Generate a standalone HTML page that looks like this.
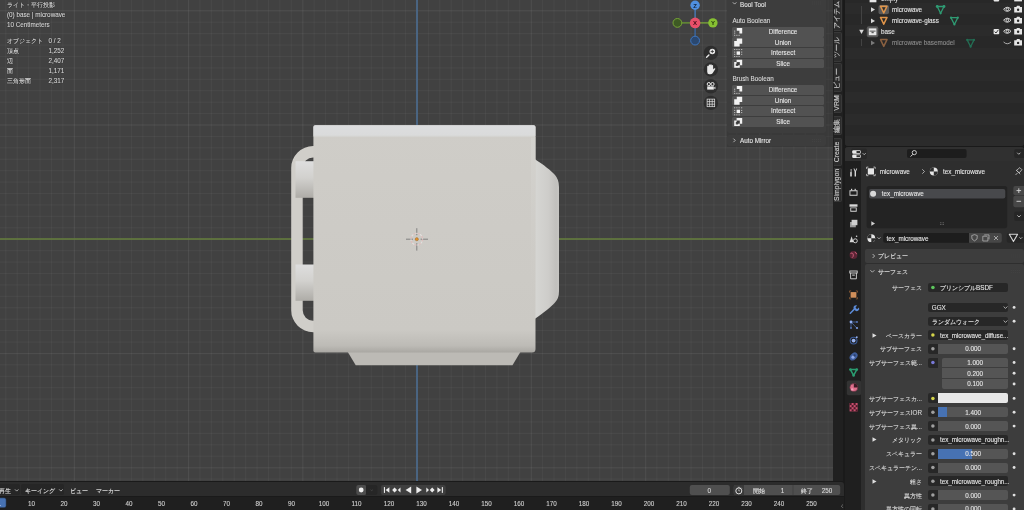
<!DOCTYPE html>
<html><head><meta charset="utf-8">
<style>
*{margin:0;padding:0;box-sizing:border-box}
html,body{width:1024px;height:510px;overflow:hidden;-webkit-font-smoothing:antialiased;background:#1a1a1a;font-family:"Liberation Sans",sans-serif;color:#e0e0e0}
.a{position:absolute}
.t{position:absolute;white-space:nowrap;font-size:6.3px;line-height:8px;-webkit-text-stroke-width:0.1px}
#vp{position:absolute;left:0;top:0;width:833px;height:481px;background-color:#414141;overflow:hidden;
background-image:
linear-gradient(to right, rgba(255,255,255,0.035) 1.4px, transparent 1.4px),
linear-gradient(to bottom, rgba(255,255,255,0.035) 1.4px, transparent 1.4px),
linear-gradient(to right, rgba(255,255,255,0.036) 1.4px, transparent 1.4px),
linear-gradient(to bottom, rgba(255,255,255,0.04) 1.4px, transparent 1.4px);
background-size:114.3px 114.3px,114.3px 114.3px,11.43px 11.43px,11.43px 11.43px;background-position:73.9px 0,0 10.3px,5.3px 0,0 10.3px}
.ov{color:#dcdcdc;text-shadow:0 0 1px #000}
.btn{position:absolute;left:732.2px;width:91.8px;height:10px;background:#525252;border-radius:1.5px}
.btn span{position:absolute;left:0;right:0;top:1.4px;-webkit-text-stroke-width:0.1px;text-align:center;font-size:6.3px;line-height:8px;color:#e6e6e6}
.tab{position:absolute;left:833px;width:9px;background:#2b2b2b;border-radius:0 2px 2px 0}
</style></head><body><div id="root" style="position:absolute;left:0;top:0;width:1024px;height:510px;will-change:transform;overflow:hidden">
<div id="vp">
  <!-- axes -->
  <div class="a" style="left:0;top:238.2px;width:833px;height:1.8px;background:linear-gradient(to bottom, rgba(93,117,61,0.4), #62793c 35%, #62793c 65%, rgba(93,117,61,0.4))"></div>
  <div class="a" style="left:415.6px;top:0;width:2.6px;height:481px;background:linear-gradient(to right, rgba(74,102,134,0.45), #4a6787 30%, #4a6787 70%, rgba(74,102,134,0.45))"></div>

  <!-- model -->
  <svg class="a" style="left:0;top:0" width="833" height="481" viewBox="0 0 833 481">
    <defs>
      <linearGradient id="prot" x1="0" x2="1" y1="0" y2="0">
        <stop offset="0" stop-color="#d6d6d3"/><stop offset="0.55" stop-color="#cecdca"/><stop offset="0.88" stop-color="#c1c0bd"/><stop offset="1" stop-color="#c6c5c2"/>
      </linearGradient>
      <linearGradient id="cyl" x1="0" x2="0" y1="0" y2="1">
        <stop offset="0" stop-color="#dedede"/><stop offset="0.45" stop-color="#d2d1ce"/><stop offset="1" stop-color="#aeaca7"/>
      </linearGradient>
      <linearGradient id="bodyb" x1="0" x2="0" y1="0" y2="1">
        <stop offset="0" stop-color="#cfcdc8"/><stop offset="0.9" stop-color="#cbc9c4"/><stop offset="0.97" stop-color="#bdbbb6"/><stop offset="1" stop-color="#a9a7a2"/>
      </linearGradient>
    <linearGradient id="rstrip" x1="0" x2="0" y1="0" y2="1"><stop offset="0" stop-color="#d4d3cf" stop-opacity="0.9"/><stop offset="1" stop-color="#cfcdc8" stop-opacity="0"/></linearGradient>
    <linearGradient id="topband" x1="0" x2="0" y1="0" y2="1"><stop offset="0" stop-color="#dcdddf"/><stop offset="0.8" stop-color="#dadbdb"/><stop offset="1" stop-color="#cfcdc8"/></linearGradient>
    </defs>
    <!-- right protrusion -->
    <path d="M535 159.2 C544 165 551 170.5 555 175 Q559 179.5 559 187 L559 291 Q559 298.5 555 302.5 C551 307 544 312.5 535 318.8 Z" fill="url(#prot)"/>
    <!-- base -->
    <path d="M347.8 352 L520.4 352 L512.5 365.3 L355.7 365.3 Z" fill="#bcbab5"/>
    <!-- handle -->
    <path fill-rule="evenodd" d="M314 146 L313.2 146 A22 22 0 0 0 291.2 168 L291.2 310.2 A22 22 0 0 0 313.2 332.2 L314 332.2 Z M314 157.5 L313.2 157.5 A10.5 10.5 0 0 0 302.7 168 L302.7 310.3 A10.5 10.5 0 0 0 313.2 320.8 L314 320.8 Z" fill="#d0cec9"/>
    <!-- cylinders -->
    <rect x="295.5" y="161.2" width="19" height="36.6" fill="url(#cyl)"/>
    <rect x="295.5" y="264.5" width="19" height="36.3" fill="url(#cyl)"/>
    <!-- body -->
    <path d="M313.4 127 Q313.4 125.2 315.4 125.2 L533.5 125.2 Q535.5 125.2 535.5 127 L535.5 349 Q535.5 352.5 532 352.5 L315.4 352.5 Q313.4 352.5 313.4 350.5 Z" fill="url(#bodyb)"/>
    <path d="M531 137 L535.5 137 L535.5 300 L531 300 Z" fill="url(#rstrip)"/>
    <rect x="313.4" y="125.2" width="222.1" height="12.4" rx="1.8" fill="url(#topband)"/>
    
  </svg>

  <!-- overlay text -->
  <div class="t ov" style="left:7px;top:1px">ライト・平行投影</div>
  <div class="t ov" style="left:7px;top:11px">(0) base | microwave</div>
  <div class="t ov" style="left:7px;top:21px">10 Centimeters</div>
  <div class="t ov" style="left:7px;top:37px">オブジェクト</div>
  <div class="t ov" style="left:48.5px;top:37px">0 / 2</div>
  <div class="t ov" style="left:7px;top:47px">頂点</div>
  <div class="t ov" style="left:48.5px;top:47px">1,252</div>
  <div class="t ov" style="left:7px;top:57px">辺</div>
  <div class="t ov" style="left:48.5px;top:57px">2,407</div>
  <div class="t ov" style="left:7px;top:67px">面</div>
  <div class="t ov" style="left:48.5px;top:67px">1,171</div>
  <div class="t ov" style="left:7px;top:77px">三角形面</div>
  <div class="t ov" style="left:48.5px;top:77px">2,317</div>

  <!-- 3d cursor -->
  <svg class="a" style="left:400px;top:223px" width="34" height="34" viewBox="400 223 34 34">
    <path d="M406 239.2 L413 239.2 M420.6 239.2 L428 239.2 M416.8 228.2 L416.8 235.2 M416.8 243.2 L416.8 250.6" stroke="#6e6e6e" stroke-width="0.8"/>
    <circle cx="416.8" cy="239.2" r="5.8" fill="none" stroke="#e8b8b8" stroke-width="1.1" stroke-dasharray="2.3 2.3" opacity="0.75"/>
    <circle cx="416.8" cy="239.2" r="5.8" fill="none" stroke="#f4eeee" stroke-width="1.1" stroke-dasharray="2.3 2.3" stroke-dashoffset="2.3" opacity="0.6"/>
    <circle cx="416.8" cy="239.2" r="1.6" fill="#e0902a" stroke="#8a5a2a" stroke-width="0.4"/>
  </svg>
  <!-- gizmo -->
  <svg class="a" style="left:660px;top:0" width="70" height="120" viewBox="660 0 70 120">
    <path d="M695.1 22.9 L695.1 5.3" stroke="#4a7fc0" stroke-width="1.3"/>
    <path d="M695.1 22.9 L695.1 40.6" stroke="#3a6aa8" stroke-width="1.3"/>
    <path d="M695.1 22.9 L712.9 22.9" stroke="#7aa838" stroke-width="1.3"/>
    <path d="M695.1 22.9 L677.4 22.9" stroke="#6a9a30" stroke-width="1.3"/>
    <circle cx="677.4" cy="22.9" r="4.4" fill="#3e5a24" stroke="#76a436" stroke-width="1"/>
    <circle cx="695.1" cy="40.6" r="4.4" fill="#2a4870" stroke="#3d76c0" stroke-width="1"/>
    <circle cx="695.1" cy="5.3" r="4.7" fill="#4f8fe0"/>
    <circle cx="712.9" cy="22.9" r="4.7" fill="#86c032"/>
    <circle cx="695.1" cy="22.9" r="5.3" fill="#e8506a"/>
    <text x="695.1" y="7.6" font-size="6" font-family="Liberation Sans" font-weight="bold" text-anchor="middle" fill="#10233d">Z</text>
    <text x="712.9" y="25.2" font-size="6" font-family="Liberation Sans" font-weight="bold" text-anchor="middle" fill="#20330a">Y</text>
    <text x="695.1" y="25.2" font-size="6" font-family="Liberation Sans" font-weight="bold" text-anchor="middle" fill="#3d0a14">X</text>
    <!-- nav buttons -->
    <g fill="rgba(30,30,30,0.55)">
      <circle cx="710.9" cy="52.9" r="7.2"/><circle cx="710.9" cy="69.5" r="7.2"/><circle cx="710.9" cy="86.3" r="7.2"/><circle cx="710.9" cy="102.9" r="7.2"/>
    </g>
    <!-- zoom -->
    <circle cx="712.3" cy="51.5" r="2.8" fill="#e8e8e8"/>
    <path d="M708.9 55 L706.6 57.3" stroke="#e8e8e8" stroke-width="1.4" stroke-linecap="round"/>
    <path d="M712.3 49.9 L712.3 53.1 M710.7 51.5 L713.9 51.5" stroke="#303030" stroke-width="0.8"/>
    <!-- hand -->
    <path d="M707.2 70 L707.2 66.6 Q707.2 65.8 708 65.8 Q708.7 65.8 708.7 66.6 L708.7 69 L708.7 65.3 Q708.7 64.5 709.5 64.5 Q710.2 64.5 710.2 65.3 L710.2 68.8 L710.2 65 Q710.2 64.2 711 64.2 Q711.7 64.2 711.7 65 L711.7 68.8 L711.7 65.6 Q711.7 64.9 712.4 64.9 Q713.1 64.9 713.1 65.6 L713.1 69.6 L713.9 68.6 Q714.6 67.9 715.2 68.4 Q715.6 68.9 715 69.6 L712.6 73.3 Q711.8 74.3 710.3 74.3 L709.3 74.3 Q707.2 74.3 707.2 71.8 Z" fill="#e8e8e8"/>
    <!-- camera -->
    <circle cx="708.8" cy="84.1" r="1.6" fill="none" stroke="#e8e8e8" stroke-width="1"/>
    <circle cx="712.5" cy="84.1" r="1.6" fill="none" stroke="#e8e8e8" stroke-width="1"/>
    <rect x="707.2" y="86.4" width="6.6" height="3.2" fill="#e8e8e8"/>
    <path d="M713.8 87.9 L715.4 86.6 L715.4 89.3 Z" fill="#e8e8e8"/>
    <!-- grid -->
    <g fill="none" stroke="#e8e8e8" stroke-width="0.7">
      <rect x="707.1" y="99.1" width="7.6" height="7.6"/>
      <path d="M709.6 99.1 L709.6 106.7 M712.2 99.1 L712.2 106.7 M707.1 101.6 L714.7 101.6 M707.1 104.2 L714.7 104.2"/>
    </g>
  </svg>

  <!-- N panel region -->
  <div class="a" style="left:727px;top:0;width:106px;height:147px;background:rgba(44,44,44,0.35)"></div>
  <div class="a" style="left:727px;top:-2px;width:99px;height:134.8px;background:#3d3d3d;border-radius:2px"></div>
  <div class="a" style="left:727px;top:134.6px;width:99px;height:11.9px;background:#3d3d3d;border-radius:2px"></div>
  <div class="t" style="left:740px;top:0.6px;color:#e6e6e6">Bool Tool</div>
  <div class="t" style="left:732.4px;top:17.2px;color:#d8d8d8">Auto Boolean</div>
  <div class="t" style="left:732.4px;top:74.8px;color:#d8d8d8">Brush Boolean</div>
  <div class="btn" style="top:26.8px;height:9.8px"><span style="left:10px">Difference</span></div>
  <div class="btn" style="top:37.2px;height:9.8px"><span style="left:10px">Union</span></div>
  <div class="btn" style="top:47.8px;height:9.8px"><span style="left:10px">Intersect</span></div>
  <div class="btn" style="top:58.5px;height:9.8px"><span style="left:10px">Slice</span></div>
  <div class="btn" style="top:84.9px;height:9.8px"><span style="left:10px">Difference</span></div>
  <div class="btn" style="top:95.5px;height:9.8px"><span style="left:10px">Union</span></div>
  <div class="btn" style="top:106.1px;height:9.8px"><span style="left:10px">Intersect</span></div>
  <div class="btn" style="top:116.9px;height:9.8px"><span style="left:10px">Slice</span></div>
  <svg class="a" style="left:727px;top:0" width="100" height="150" viewBox="727 0 100 150">
<path d="M732.8 2.3 L734.6 4.1 L736.4 2.3" fill="none" stroke="#d0d0d0" stroke-width="0.8"/>
<path d="M733.4 138.6 L735.2 140.4 L733.4 142.2" fill="none" stroke="#d0d0d0" stroke-width="0.8"/>
<g stroke="#484848" stroke-width="0.5" stroke-dasharray="1 1"><path d="M812 2 L822 2 M812 4 L822 4 M812 139.5 L822 139.5 M812 141.5 L822 141.5"/></g>
<path d="M736.8000000000001 28.0 L742.2 28.0 L742.2 33.4 L739.4000000000001 33.4 L739.4000000000001 30.8 L736.8000000000001 30.8 Z" fill="#f2f2f2"/><g fill="#cfcfcf"><rect x="734.2" y="30.6" width="1" height="1"/><rect x="734.2" y="32.6" width="1" height="1"/><rect x="734.2" y="34.8" width="1" height="1"/><rect x="736.4000000000001" y="34.8" width="1" height="1"/><rect x="738.6" y="34.8" width="1" height="1"/></g>
<path d="M736.8000000000001 38.400000000000006 L742.2 38.400000000000006 L742.2 43.800000000000004 L739.6 43.800000000000004 L739.6 46.400000000000006 L734.2 46.400000000000006 L734.2 41.00000000000001 L736.8000000000001 41.00000000000001 Z" fill="#f2f2f2"/>
<rect x="736.6" y="51.4" width="3.4" height="3.4" fill="#f2f2f2"/><g fill="#cfcfcf"><rect x="734.2" y="49.0" width="1" height="1"/><rect x="736.4000000000001" y="49.0" width="1" height="1"/><rect x="738.6" y="49.0" width="1" height="1"/><rect x="741.2" y="49.0" width="1" height="1"/><rect x="734.2" y="51.6" width="1" height="1"/><rect x="734.2" y="53.8" width="1" height="1"/><rect x="741.2" y="51.6" width="1" height="1"/><rect x="741.2" y="53.8" width="1" height="1"/><rect x="734.2" y="56.0" width="1" height="1"/><rect x="736.4000000000001" y="56.0" width="1" height="1"/><rect x="738.6" y="56.0" width="1" height="1"/></g>
<path fill-rule="evenodd" d="M736.6 59.7 L742.2 59.7 L742.2 65.3 L739.8000000000001 65.3 L739.8000000000001 67.7 L734.2 67.7 L734.2 62.1 L736.6 62.1 Z M735.8000000000001 63.7 L735.8000000000001 66.10000000000001 L738.2 66.10000000000001 L738.2 63.7 Z" fill="#f2f2f2"/><rect x="736.6" y="62.1" width="3.2" height="3.2" fill="#3a3a3a"/>
<path d="M736.8000000000001 86.10000000000001 L742.2 86.10000000000001 L742.2 91.50000000000001 L739.4000000000001 91.50000000000001 L739.4000000000001 88.9 L736.8000000000001 88.9 Z" fill="#f2f2f2"/><g fill="#cfcfcf"><rect x="734.2" y="88.7" width="1" height="1"/><rect x="734.2" y="90.7" width="1" height="1"/><rect x="734.2" y="92.9" width="1" height="1"/><rect x="736.4000000000001" y="92.9" width="1" height="1"/><rect x="738.6" y="92.9" width="1" height="1"/></g>
<path d="M736.8000000000001 96.7 L742.2 96.7 L742.2 102.10000000000001 L739.6 102.10000000000001 L739.6 104.7 L734.2 104.7 L734.2 99.3 L736.8000000000001 99.3 Z" fill="#f2f2f2"/>
<rect x="736.6" y="109.7" width="3.4" height="3.4" fill="#f2f2f2"/><g fill="#cfcfcf"><rect x="734.2" y="107.3" width="1" height="1"/><rect x="736.4000000000001" y="107.3" width="1" height="1"/><rect x="738.6" y="107.3" width="1" height="1"/><rect x="741.2" y="107.3" width="1" height="1"/><rect x="734.2" y="109.89999999999999" width="1" height="1"/><rect x="734.2" y="112.1" width="1" height="1"/><rect x="741.2" y="109.89999999999999" width="1" height="1"/><rect x="741.2" y="112.1" width="1" height="1"/><rect x="734.2" y="114.3" width="1" height="1"/><rect x="736.4000000000001" y="114.3" width="1" height="1"/><rect x="738.6" y="114.3" width="1" height="1"/></g>
<path fill-rule="evenodd" d="M736.6 118.10000000000001 L742.2 118.10000000000001 L742.2 123.7 L739.8000000000001 123.7 L739.8000000000001 126.10000000000001 L734.2 126.10000000000001 L734.2 120.50000000000001 L736.6 120.50000000000001 Z M735.8000000000001 122.10000000000001 L735.8000000000001 124.50000000000001 L738.2 124.50000000000001 L738.2 122.10000000000001 Z" fill="#f2f2f2"/><rect x="736.6" y="120.50000000000001" width="3.2" height="3.2" fill="#3a3a3a"/>
</svg>
  <div class="t" style="left:740px;top:137.1px;color:#e6e6e6">Auto Mirror</div>

</div>
  <!-- tab strip -->
  <div class="a" style="left:833px;top:0;width:10px;height:481px;background:#202020"></div>
  <div class="a" style="left:833.5px;top:-2px;width:8.4px;height:33.4px;background:#2c2c2c;border:0.6px solid #383838;border-left:none;border-radius:0 2px 2px 0"></div>
  <div class="t" style="left:797.1px;top:10.50px;width:80px;text-align:center;transform:rotate(-90deg);color:#cfcfcf;font-size:6.9px">アイテム</div>
  <div class="a" style="left:833.5px;top:32.4px;width:8.4px;height:29.4px;background:#2c2c2c;border:0.6px solid #383838;border-left:none;border-radius:0 2px 2px 0"></div>
  <div class="t" style="left:797.1px;top:42.90px;width:80px;text-align:center;transform:rotate(-90deg);color:#cfcfcf;font-size:6.9px">ツール</div>
  <div class="a" style="left:833.5px;top:63.4px;width:8.4px;height:29.0px;background:#2c2c2c;border:0.6px solid #383838;border-left:none;border-radius:0 2px 2px 0"></div>
  <div class="t" style="left:797.1px;top:73.70px;width:80px;text-align:center;transform:rotate(-90deg);color:#cfcfcf;font-size:6.9px">ビュー</div>
  <div class="a" style="left:833.5px;top:93.8px;width:8.4px;height:19.7px;background:#2c2c2c;border:0.6px solid #383838;border-left:none;border-radius:0 2px 2px 0"></div>
  <div class="t" style="left:797.1px;top:99.45px;width:80px;text-align:center;transform:rotate(-90deg);color:#cfcfcf;font-size:6.9px">VRM</div>
  <div class="a" style="left:833.5px;top:116px;width:8.4px;height:19.4px;background:#2c2c2c;border:0.6px solid #383838;border-left:none;border-radius:0 2px 2px 0"></div>
  <div class="t" style="left:797.1px;top:121.50px;width:80px;text-align:center;transform:rotate(-90deg);color:#cfcfcf;font-size:6.9px">編集</div>
  <div class="a" style="left:833.5px;top:137.9px;width:8.4px;height:28.0px;background:#2c2c2c;border:0.6px solid #383838;border-left:none;border-radius:0 2px 2px 0"></div>
  <div class="t" style="left:797.1px;top:147.70px;width:80px;text-align:center;transform:rotate(-90deg);color:#cfcfcf;font-size:6.9px">Create</div>
  <div class="a" style="left:833.5px;top:168.3px;width:8.4px;height:34.1px;background:#2c2c2c;border:0.6px solid #383838;border-left:none;border-radius:0 2px 2px 0"></div>
  <div class="t" style="left:797.1px;top:181.15px;width:80px;text-align:center;transform:rotate(-90deg);color:#cfcfcf;font-size:6.9px">Simplygon</div>

<!-- outliner -->
<div class="a" style="left:845px;top:0;width:179px;height:146px;background:#282828;border-radius:0 0 3px 3px;overflow:hidden">
  <div class="a" style="left:0;top:3.2px;width:179px;height:11.1px;background:#2b2b2b"></div>
  <div class="a" style="left:0;top:25.4px;width:179px;height:11.1px;background:#2b2b2b"></div>
  <div class="a" style="left:0;top:47.6px;width:179px;height:11.1px;background:#2b2b2b"></div>
  <div class="a" style="left:0;top:69.8px;width:179px;height:11.1px;background:#2b2b2b"></div>
  <div class="a" style="left:0;top:92px;width:179px;height:11.1px;background:#2b2b2b"></div>
  <div class="a" style="left:0;top:114.2px;width:179px;height:11.1px;background:#2b2b2b"></div>
  <div class="a" style="left:0;top:136.4px;width:179px;height:11.1px;background:#2b2b2b"></div>
</div>
<svg class="a" style="left:845px;top:0" width="179" height="146" viewBox="845 0 179 146">
  <!-- tree lines -->
  <line x1="861.5" y1="6" x2="861.5" y2="24" stroke="#4a4a4a" stroke-width="0.8"/>
  <line x1="861.5" y1="39" x2="861.5" y2="46" stroke="#4a4a4a" stroke-width="0.8"/>
  <!-- top row collection icon -->
  <rect x="869.6" y="-4" width="6.8" height="6.3" fill="#e6e6e6"/>
  <!-- microwave row -->
  <path d="M871 7.3 L875 9.6 L871 11.9 Z" fill="#d8d8d8"/>
  <rect x="878.5" y="5" width="10.5" height="9.3" rx="2" fill="#5a5a5a"/>
  <path d="M880.5 6.2 L887 6.2 L883.75 13 Z" fill="none" stroke="#e0954a" stroke-width="1.5" stroke-linejoin="round"/>
  <path d="M882.3 7.6 L885.2 7.6 L883.75 10.5 Z" fill="#3a2a1a"/>
  <!-- glass row -->
  <path d="M871 18.6 L875 20.9 L871 23.2 Z" fill="#d8d8d8"/>
  <path d="M880.5 17.4 L887 17.4 L883.75 24.2 Z" fill="none" stroke="#e0954a" stroke-width="1.5" stroke-linejoin="round"/>
  <!-- base row -->
  <path d="M859.2 29.7 L863.8 29.7 L861.5 34 Z" fill="#d8d8d8"/>
  <rect x="866.8" y="26.3" width="11.5" height="11" rx="2" fill="#5a5a5a"/>
  <rect x="868.8" y="28.4" width="7.6" height="6.8" fill="#e8e8e8"/>
  <rect x="869.6" y="30.6" width="6" height="1" fill="#5a5a5a"/>
  <rect x="871.5" y="31.6" width="2.2" height="1.6" fill="#5a5a5a"/>
  <!-- basemodel row -->
  <path d="M871 40.6 L875 42.9 L871 45.2 Z" fill="#7a7a7a"/>
  <path d="M880.5 39.6 L887 39.6 L883.75 46.4 Z" fill="none" stroke="#8a6040" stroke-width="1.5" stroke-linejoin="round"/>
  <!-- green mesh data icons -->
  <g fill="none" stroke="#2f9c74" stroke-width="1.3" stroke-linejoin="round">
    <path d="M937.2 6.5 L944 6.5 L940.6 13.3 Z"/>
    <path d="M951 17.7 L957.8 17.7 L954.4 24.5 Z"/>
    <path d="M967.2 39.9 L974 39.9 L970.6 46.7 Z" stroke="#236e54"/>
  </g>
  <g fill="#2f9c74">
    <circle cx="937.2" cy="6.5" r="1.4"/><circle cx="944" cy="6.5" r="1.4"/><circle cx="940.6" cy="13.3" r="1.1"/>
    <circle cx="951" cy="17.7" r="1.1"/><circle cx="957.8" cy="17.7" r="1.1"/><circle cx="954.4" cy="24.5" r="1.1"/>
  </g>
  <g fill="#236e54">
    <circle cx="967.2" cy="39.9" r="1.1"/><circle cx="974" cy="39.9" r="1.1"/><circle cx="970.6" cy="46.7" r="1.1"/>
  </g>
  <!-- checkboxes -->
  <rect x="993.6" y="-4" width="5.6" height="5.4" rx="0.8" fill="#e6e6e6"/>
  <rect x="993.6" y="28.9" width="5.6" height="5.4" rx="0.8" fill="#e6e6e6"/>
  <path d="M994.6 31.6 L996 33 L998.4 29.8" fill="none" stroke="#282828" stroke-width="0.9"/>
  <!-- eyes -->
  <g fill="none" stroke="#e0e0e0" stroke-width="0.9">
    <path d="M1003.6 9.3 Q1007.3 5.2 1011 9.3 Q1007.3 13.4 1003.6 9.3 Z"/>
    <path d="M1003.6 20.2 Q1007.3 16.1 1011 20.2 Q1007.3 24.3 1003.6 20.2 Z"/>
    <path d="M1003.6 31.3 Q1007.3 27.2 1011 31.3 Q1007.3 35.4 1003.6 31.3 Z"/>
    <path d="M1003.6 42 Q1007.3 45.5 1011 42" stroke="#bdbdbd"/>
    <circle cx="1007.3" cy="9.3" r="1.3"/><circle cx="1007.3" cy="20.2" r="1.3"/><circle cx="1007.3" cy="31.3" r="1.3"/>
  </g>
  <!-- cameras -->
  <g fill="#e6e6e6">
    <path d="M1014.2 7 L1016.3 7 L1017 5.8 L1019.5 5.8 L1020.2 7 L1022 7 L1022 12.4 L1014.2 12.4 Z"/>
    <path d="M1014.2 18 L1016.3 18 L1017 16.8 L1019.5 16.8 L1020.2 18 L1022 18 L1022 23.4 L1014.2 23.4 Z"/>
    <path d="M1014.2 29.1 L1016.3 29.1 L1017 27.9 L1019.5 27.9 L1020.2 29.1 L1022 29.1 L1022 34.5 L1014.2 34.5 Z"/>
    <path d="M1014.2 40.2 L1016.3 40.2 L1017 39 L1019.5 39 L1020.2 40.2 L1022 40.2 L1022 45.6 L1014.2 45.6 Z"/>
    <path d="M1014.2 -4 L1022 -4 L1022 1.4 L1014.2 1.4 Z"/>
  </g>
  <g fill="#282828">
    <circle cx="1018.1" cy="9.7" r="1.2"/><circle cx="1018.1" cy="20.7" r="1.2"/><circle cx="1018.1" cy="31.8" r="1.2"/><circle cx="1018.1" cy="42.9" r="1.2"/>
  </g>
</svg>
<div class="t" style="left:881px;top:-5.1px;color:#e0e0e0">empty</div>
<div class="t" style="left:892px;top:6.0px;color:#e6e6e6">microwave</div>
<div class="t" style="left:892px;top:17.2px;color:#e6e6e6">microwave-glass</div>
<div class="t" style="left:881px;top:28.3px;color:#e6e6e6">base</div>
<div class="t" style="left:892px;top:39.4px;color:#8c8c8c">microwave basemodel</div>

<!-- properties -->
<div class="a" style="left:845px;top:147px;width:179px;height:363px;background:#2e2e2e;border-radius:3px 3px 0 0;overflow:hidden">
  <div class="a" style="left:0;top:0;width:179px;height:14px;background:#303030"></div>
  <div class="a" style="left:0;top:14px;width:16px;height:349px;background:#1f1f1f"></div>
</div>
<div class="a" style="left:865.2px;top:249.4px;width:158.80px;height:13.20px;background:#3d3d3d;border-radius:2px;"></div>
<div class="a" style="left:865.2px;top:264.4px;width:158.80px;height:247.60px;background:#3d3d3d;border-radius:2px 2px 0 0;"></div><svg class="a" style="left:845px;top:146px" width="179" height="364" viewBox="845 146 179 364">
  <!-- header editor type icon -->
  <rect x="851" y="148.6" width="16" height="10.6" rx="2" fill="#282828"/>
  <rect x="852.2" y="150.3" width="8.6" height="3.4" rx="1.2" fill="#e6e6e6"/>
  <rect x="852.2" y="154.5" width="8.6" height="3.4" rx="1.2" fill="#e6e6e6"/>
  <rect x="856.5" y="151" width="3.6" height="2" fill="#303030"/>
  <rect x="856.5" y="155.2" width="3.6" height="2" fill="#303030"/>
  <path d="M862.7 153.2 L864.2 154.7 L865.7 153.2" fill="none" stroke="#d0d0d0" stroke-width="0.8"/>
  <!-- search field -->
  <rect x="907" y="149" width="59.6" height="9" rx="2" fill="#1d1d1d"/>
  <circle cx="914.3" cy="152.6" r="2.1" fill="none" stroke="#d8d8d8" stroke-width="0.9"/>
  <path d="M912.8 154.3 L910.6 156.6" stroke="#d8d8d8" stroke-width="1"/>
  <!-- dropdown btn -->
  <rect x="1014.2" y="149" width="11" height="9" rx="2" fill="#262626"/>
  <path d="M1017.2 152.7 L1018.8 154.3 L1020.4 152.7" fill="none" stroke="#d0d0d0" stroke-width="0.8"/>

  <!-- nav icons -->
  <g fill="#d8d8d8" stroke="none">
    <!-- tool -->
    <rect x="850.2" y="172" width="1.6" height="4.6" rx="0.5"/>
    <rect x="850.7" y="169" width="0.8" height="3"/>
    <path d="M853.5 168.6 L854.4 168.6 L855.3 170.8 L856.3 168.6 L857.2 168.6 L856 171.6 L856 176.6 L854.6 176.6 L854.6 171.6 Z"/>
    <!-- render -->
    <path d="M849.5 190.2 L857.5 190.2 L857.5 195.7 L849.5 195.7 Z M850.4 191.2 L850.4 194.8 L856.6 194.8 L856.6 191.2 Z" fill-rule="evenodd"/>
    <rect x="851" y="188.8" width="1.2" height="1.6"/><rect x="854.6" y="188.8" width="1.2" height="1.6"/>
    <!-- output (printer) -->
    <rect x="849.5" y="204.3" width="8" height="2.4"/>
    <path d="M850.3 207.4 L856.7 207.4 L856.7 211.7 L850.3 211.7 Z M851.2 208.3 L851.2 210.8 L855.8 210.8 L855.8 208.3 Z" fill-rule="evenodd"/>
    <!-- view layer -->
    <path d="M850 222 L855.8 222 L855.8 227.3 L850 227.3 Z" fill="#9a9a9a"/>
    <path d="M851.6 219.8 L857.4 219.8 L857.4 225.2 L851.6 225.2 Z" fill="#cfcfcf"/>
    <!-- scene -->
    <path d="M851.6 236.2 L853.6 242.2 L849.6 242.2 Z"/>
    <circle cx="855.3" cy="240.8" r="2" fill="none" stroke="#d8d8d8" stroke-width="0.9"/>
    <circle cx="856.6" cy="236.2" r="0.8"/>
  </g>
  <!-- world -->
  <circle cx="853.5" cy="255" r="3.9" fill="#5a2434"/>
  <path d="M850.5 253.5 Q852.5 252 853.2 254 Q854 256.5 852 257.8 M855 251.8 Q855.6 253.6 857 254" fill="none" stroke="#d0607a" stroke-width="0.9"/>
  <!-- collection -->
  <g fill="none" stroke="#d8d8d8" stroke-width="0.9">
    <rect x="849.8" y="271" width="7.4" height="2"/>
    <path d="M850.6 273 L850.6 278.8 L856.4 278.8 L856.4 273"/>
  </g>
  <rect x="852.2" y="274.6" width="2.6" height="1" fill="#d8d8d8"/>
  <!-- object -->
  <rect x="850.6" y="292.1" width="5.8" height="5.6" fill="#d2905a"/>
  <path d="M849.5 290.9 L851.2 290.9 M849.5 290.9 L849.5 292.6 M857.5 290.9 L855.8 290.9 M857.5 290.9 L857.5 292.6 M849.5 298.9 L851.2 298.9 M849.5 298.9 L849.5 297.2 M857.5 298.9 L855.8 298.9 M857.5 298.9 L857.5 297.2" stroke="#8a5a35" stroke-width="0.8"/>
  <!-- modifier wrench -->
  <path d="M850.3 313.2 L854.6 308.9" stroke="#5b8ad6" stroke-width="1.5" stroke-linecap="round"/>
  <path d="M853.6 308.6 A2.5 2.5 0 0 1 857.2 305.6 L855.6 307.3 L856.1 308.5 L857.4 308.9 L858.9 307.4 A2.5 2.5 0 0 1 855.2 310.6 Z" fill="#5b8ad6"/>
  <!-- particles -->
  <path d="M851 322 L856.8 322 M851 322 L856.8 328 M851 322 L851 328" stroke="#4a6aa8" stroke-width="0.8"/>
  <circle cx="851" cy="322" r="1.4" fill="#90aef0"/>
  <circle cx="857" cy="328" r="1.1" fill="#7a9ae0"/>
  <circle cx="851" cy="328" r="0.9" fill="#5a7ac0"/>
  <circle cx="857" cy="322" r="0.9" fill="#5a7ac0"/>
  <!-- physics -->
  <circle cx="853.6" cy="340.6" r="3.4" fill="none" stroke="#3a5a98" stroke-width="1.1"/>
  <circle cx="853.6" cy="340.6" r="1.9" fill="#9ab4f0"/>
  <circle cx="856.8" cy="337.2" r="0.9" fill="#9ab4f0"/>
  <!-- constraints -->
  <ellipse cx="853.6" cy="356.4" rx="3.2" ry="4.6" transform="rotate(45 853.6 356.4)" fill="#3f5e9c"/>
  <circle cx="853" cy="357.2" r="1.6" fill="#8ea8e8"/>
  <circle cx="854.6" cy="355.4" r="1.1" fill="#2a3f6a"/>
  <!-- data -->
  <path d="M850.4 369.6 L856.8 369.6 L853.6 375.4 Z" fill="none" stroke="#2a9c70" stroke-width="1.5" stroke-linejoin="round"/>
  <g fill="#2a9c70"><circle cx="850.4" cy="369.6" r="1.3"/><circle cx="856.8" cy="369.6" r="1.3"/><circle cx="853.6" cy="375.4" r="1.3"/></g>
  <!-- material active -->
  <rect x="846.8" y="380.4" width="14.4" height="14.8" rx="2" fill="#333333"/>
  <circle cx="853.8" cy="387.6" r="4" fill="#df6f8c" stroke="#5a2a38" stroke-width="0.6"/>
  <path d="M853.8 383.6 A4 4 0 0 1 857.8 387.6 L853.8 387.6 Z" fill="#3a1a24"/>
  <circle cx="852.2" cy="389.4" r="1.2" fill="#f0a0b8"/>
  <!-- texture -->
  <rect x="849.6" y="403" width="8" height="8.4" fill="#c8506e"/>
  <g fill="#4a1a28">
    <rect x="849.6" y="403" width="2" height="2.1"/><rect x="853.6" y="403" width="2" height="2.1"/>
    <rect x="851.6" y="405.1" width="2" height="2.1"/><rect x="855.6" y="405.1" width="2" height="2.1"/>
    <rect x="849.6" y="407.2" width="2" height="2.1"/><rect x="853.6" y="407.2" width="2" height="2.1"/>
    <rect x="851.6" y="409.3" width="2" height="2.1"/><rect x="855.6" y="409.3" width="2" height="2.1"/>
  </g>

  <!-- breadcrumb -->
  <rect x="867.8" y="168.3" width="6.2" height="6.2" fill="#e6e6e6"/>
  <path d="M866.6 167.1 L868.4 167.1 M866.6 167.1 L866.6 168.9 M875.2 167.1 L873.4 167.1 M875.2 167.1 L875.2 168.9 M866.6 175.7 L868.4 175.7 M866.6 175.7 L866.6 173.9 M875.2 175.7 L873.4 175.7 M875.2 175.7 L875.2 173.9" stroke="#e6e6e6" stroke-width="0.7"/>
  <path d="M922.3 169.3 L924.5 171.5 L922.3 173.7" fill="none" stroke="#c8c8c8" stroke-width="0.8"/>
  <circle cx="933.8" cy="171.5" r="4" fill="#e6e6e6"/>
  <path d="M933.8 167.5 A4 4 0 0 0 929.8 171.5 L933.8 171.5 Z M933.8 171.5 L937.8 171.5 A4 4 0 0 1 933.8 175.5 Z" fill="#2e2e2e"/>
  <!-- pin -->
  <path d="M1015.5 175 L1017.6 172.9 M1016.6 170.3 L1019.8 167.6 L1021.9 169.7 L1019.2 172.9 Z M1016 170 L1020.2 174.2" fill="none" stroke="#c8c8c8" stroke-width="0.8"/>

  <!-- list box -->
  <rect x="866.6" y="186" width="140.6" height="42.2" rx="2.5" fill="#232323"/>
  <rect x="869" y="189" width="136.3" height="9.6" rx="2" fill="#48494c"/>
  <circle cx="873.1" cy="193.8" r="3" fill="#d8d8d8"/>
  <path d="M871.3 221.3 L875 223.5 L871.3 225.7 Z" fill="#d0d0d0"/>
  <g fill="#7a7a7a"><rect x="940" y="222.4" width="0.8" height="0.8"/><rect x="941.6" y="222.4" width="0.8" height="0.8"/><rect x="943.2" y="222.4" width="0.8" height="0.8"/><rect x="940" y="224.2" width="0.8" height="0.8"/><rect x="941.6" y="224.2" width="0.8" height="0.8"/><rect x="943.2" y="224.2" width="0.8" height="0.8"/></g>
  <!-- + - buttons -->
  <rect x="1013.3" y="186" width="12" height="9.2" rx="2" fill="#474747"/>
  <rect x="1013.3" y="195.7" width="12" height="11.5" rx="2" fill="#474747"/>
  <path d="M1018.8 188.3 L1018.8 193 M1016.5 190.6 L1021.1 190.6" stroke="#d8d8d8" stroke-width="0.9"/>
  <path d="M1016.5 201.3 L1021.1 201.3" stroke="#d8d8d8" stroke-width="0.9"/>
  <rect x="1014.2" y="211.5" width="11" height="9.5" rx="2" fill="#262626"/>
  <path d="M1017.3 215.3 L1019 217 L1020.7 215.3" fill="none" stroke="#d0d0d0" stroke-width="0.8"/>

  <!-- datablock row -->
  <circle cx="871.3" cy="238.2" r="3.9" fill="#e6e6e6"/>
  <path d="M871.3 234.3 A3.9 3.9 0 0 0 867.4 238.2 L871.3 238.2 Z M871.3 238.2 L875.2 238.2 A3.9 3.9 0 0 1 871.3 242.1 Z" fill="#2e2e2e"/>
  <path d="M877.6 237.4 L879 238.8 L880.4 237.4" fill="none" stroke="#d0d0d0" stroke-width="0.8"/>
  <rect x="883.2" y="233" width="88" height="9.8" rx="2" fill="#1d1d1d"/>
  <rect x="969" y="233" width="32.8" height="9.8" rx="2" fill="#474747"/>
  <rect x="969" y="233" width="4" height="9.8" fill="#474747"/>
  <path d="M974.5 234.6 L977.3 235.6 L977 239 L974.5 240.9 L972 239 L971.7 235.6 Z" fill="none" stroke="#bdbdbd" stroke-width="0.7"/>
  <path d="M982.8 236.2 L986.6 236.2 L987.9 237.5 L987.9 241 L982.8 241 Z M984.2 234.9 L989 234.9 L989 239.4" fill="none" stroke="#bdbdbd" stroke-width="0.7"/>
  <path d="M994 236 L998 240 M998 236 L994 240" stroke="#bdbdbd" stroke-width="0.8"/>
  <rect x="1006.8" y="233" width="20" height="9.8" rx="2" fill="#262626"/>
  <path d="M1009.3 234.3 L1017.6 234.3 L1013.45 241.6 Z" fill="none" stroke="#d8d8d8" stroke-width="1.1" stroke-linejoin="round"/>
  <path d="M1019.4 237.3 L1020.8 238.7 L1022.2 237.3" fill="none" stroke="#d0d0d0" stroke-width="0.8"/>

  <!-- panel header chevrons & grips -->
  <path d="M872.6 254 L874.6 256 L872.6 258" fill="none" stroke="#cfcfcf" stroke-width="0.8"/>
  <path d="M870.4 270.2 L872.4 272.2 L874.4 270.2" fill="none" stroke="#cfcfcf" stroke-width="0.8"/>
  <g stroke="#474747" stroke-width="0.5" stroke-dasharray="1 1">
    <path d="M1011 255 L1021 255 M1011 257 L1021 257"/>
    <path d="M1011 270.4 L1021 270.4 M1011 272.4 L1021 272.4"/>
  </g>
</svg>
<div class="t" style="left:879.7px;top:167.9px;color:#e6e6e6">microwave</div>
<div class="t" style="left:943px;top:167.9px;color:#e6e6e6">tex_microwave</div>
<div class="t" style="left:881.8px;top:190.2px;color:#e6e6e6">tex_microwave</div>
<div class="t" style="left:886.5px;top:234.7px;color:#e6e6e6">tex_microwave</div>

<div class="t" style="left:877.5px;top:252.4px;color:#e0e0e0;">プレビュー</div>
<div class="t" style="left:877.5px;top:267.79999999999995px;color:#e0e0e0;">サーフェス</div>
<div class="t" style="left:802px;width:120px;text-align:right;top:283.9px;color:#d8d8d8">サーフェス</div>
<div class="a" style="left:928.2px;top:283.0px;width:79.80px;height:9.00px;background:#272727;border-radius:2px;"></div>
<svg class="a" style="left:928px;top:283px" width="9" height="9" viewBox="928 283 9 9"><circle cx="932.9" cy="287.5" r="1.8" fill="#5ec85e"/></svg>
<div class="t" style="left:940px;top:283.9px;color:#e6e6e6;">プリンシプルBSDF</div>
<div class="a" style="left:928.2px;top:302.9px;width:79.80px;height:9.00px;background:#272727;border-radius:2px;"></div>
<div class="t" style="left:931.8px;top:303.79999999999995px;color:#e6e6e6;">GGX</div>
<svg class="a" style="left:1002.7px;top:305.90px" width="5" height="3"><path d="M0.6 0.5 L2.5 2.4 L4.4 0.5" fill="none" stroke="#cfcfcf" stroke-width="0.8"/></svg>
<svg class="a" style="left:1010px;top:303px" width="9" height="9" viewBox="1010 303 9 9"><circle cx="1014.1" cy="307.4" r="1.45" fill="#e0e0e0"/></svg>
<div class="a" style="left:928.2px;top:316.7px;width:79.80px;height:9.00px;background:#272727;border-radius:2px;"></div>
<div class="t" style="left:931.8px;top:317.59999999999997px;color:#e6e6e6;">ランダムウォーク</div>
<svg class="a" style="left:1002.7px;top:319.70px" width="5" height="3"><path d="M0.6 0.5 L2.5 2.4 L4.4 0.5" fill="none" stroke="#cfcfcf" stroke-width="0.8"/></svg>
<svg class="a" style="left:1010px;top:317px" width="9" height="9" viewBox="1010 317 9 9"><circle cx="1014.1" cy="321.2" r="1.45" fill="#e0e0e0"/></svg>
<svg class="a" style="left:872px;top:332.60px" width="5" height="5"><path d="M0.5 0.3 L4.5 2.5 L0.5 4.7Z" fill="#e0e0e0"/></svg>
<div class="t" style="left:802px;width:120px;text-align:right;top:331.5px;color:#d8d8d8">ベースカラー</div>
<div class="a" style="left:928.2px;top:330.1px;width:79.80px;height:10.00px;background:#272727;border-radius:2px;"></div>
<svg class="a" style="left:928px;top:331px" width="9" height="9" viewBox="928 331 9 9"><circle cx="932.9" cy="335.1" r="1.75" fill="#d4d44a"/></svg>
<div class="t" style="left:940px;top:331.5px;color:#e6e6e6;letter-spacing:-0.04px">tex_microwave_diffuse...</div>
<div class="t" style="left:802px;width:120px;text-align:right;top:345.09999999999997px;color:#d8d8d8">サブサーフェス</div>
<div class="a" style="left:928.2px;top:343.7px;width:10.00px;height:10.00px;background:#272727;border-radius:2px 0 0 2px;"></div>
<svg class="a" style="left:928px;top:344px" width="9" height="9" viewBox="928 344 9 9"><circle cx="932.9" cy="348.7" r="1.75" fill="#a0a0a0"/></svg>
<div class="a" style="left:938.2px;top:343.7px;width:69.80px;height:10.00px;background:#555555;border-radius:0 2px 2px 0;"></div>
<div class="t" style="left:938.2px;width:69.79999999999995px;text-align:center;top:345.09999999999997px;color:#e6e6e6">0.000</div>
<svg class="a" style="left:1010px;top:344px" width="9" height="9" viewBox="1010 344 9 9"><circle cx="1014.1" cy="348.7" r="1.45" fill="#e0e0e0"/></svg>
<div class="t" style="left:802px;width:120px;text-align:right;top:358.9px;color:#d8d8d8">サブサーフェス範...</div>
<div class="a" style="left:928.2px;top:357.5px;width:10.00px;height:10.00px;background:#272727;border-radius:2px 0 0 2px;"></div>
<svg class="a" style="left:928px;top:358px" width="9" height="9" viewBox="928 358 9 9"><circle cx="932.9" cy="362.5" r="1.75" fill="#7a7ad8"/></svg>
<div class="a" style="left:942.4px;top:357.6px;width:65.60px;height:9.80px;background:#555555;border-radius:2px 2px 0 0;"></div>
<div class="t" style="left:942.4px;width:65.60000000000002px;text-align:center;top:358.9px;color:#e6e6e6">1.000</div>
<svg class="a" style="left:1010px;top:358px" width="9" height="9" viewBox="1010 358 9 9"><circle cx="1014.1" cy="362.5" r="1.45" fill="#e0e0e0"/></svg>
<div class="a" style="left:942.4px;top:368.3px;width:65.60px;height:9.80px;background:#555555;border-radius:0;"></div>
<div class="t" style="left:942.4px;width:65.60000000000002px;text-align:center;top:369.59999999999997px;color:#e6e6e6">0.200</div>
<svg class="a" style="left:1010px;top:369px" width="9" height="9" viewBox="1010 369 9 9"><circle cx="1014.1" cy="373.2" r="1.45" fill="#e0e0e0"/></svg>
<div class="a" style="left:942.4px;top:379.1px;width:65.60px;height:9.80px;background:#555555;border-radius:0 0 2px 2px;"></div>
<div class="t" style="left:942.4px;width:65.60000000000002px;text-align:center;top:380.4px;color:#e6e6e6">0.100</div>
<svg class="a" style="left:1010px;top:380px" width="9" height="9" viewBox="1010 380 9 9"><circle cx="1014.1" cy="384.0" r="1.45" fill="#e0e0e0"/></svg>
<div class="t" style="left:802px;width:120px;text-align:right;top:394.79999999999995px;color:#d8d8d8">サブサーフェスカ...</div>
<div class="a" style="left:928.2px;top:393.4px;width:10.00px;height:10.00px;background:#272727;border-radius:2px 0 0 2px;"></div>
<svg class="a" style="left:928px;top:394px" width="9" height="9" viewBox="928 394 9 9"><circle cx="932.9" cy="398.4" r="1.75" fill="#d4d44a"/></svg>
<div class="a" style="left:938.2px;top:393.4px;width:69.80px;height:10.00px;background:#e8e8e8;border-radius:0 2px 2px 0;"></div>
<svg class="a" style="left:1010px;top:394px" width="9" height="9" viewBox="1010 394 9 9"><circle cx="1014.1" cy="398.4" r="1.45" fill="#e0e0e0"/></svg>
<div class="t" style="left:802px;width:120px;text-align:right;top:408.7px;color:#d8d8d8">サブサーフェスIOR</div>
<div class="a" style="left:928.2px;top:407.3px;width:10.00px;height:10.00px;background:#272727;border-radius:2px 0 0 2px;"></div>
<svg class="a" style="left:928px;top:408px" width="9" height="9" viewBox="928 408 9 9"><circle cx="932.9" cy="412.3" r="1.75" fill="#a0a0a0"/></svg>
<div class="a" style="left:938.2px;top:407.3px;width:69.80px;height:10.00px;background:#555555;border-radius:0 2px 2px 0;"></div>
<div class="a" style="left:938.2px;top:407.3px;width:9.10px;height:10.00px;background:#4772b3;border-radius:0;"></div>
<div class="t" style="left:938.2px;width:69.79999999999995px;text-align:center;top:408.7px;color:#e6e6e6">1.400</div>
<svg class="a" style="left:1010px;top:408px" width="9" height="9" viewBox="1010 408 9 9"><circle cx="1014.1" cy="412.3" r="1.45" fill="#e0e0e0"/></svg>
<div class="t" style="left:802px;width:120px;text-align:right;top:422.5px;color:#d8d8d8">サブサーフェス異...</div>
<div class="a" style="left:928.2px;top:421.1px;width:10.00px;height:10.00px;background:#272727;border-radius:2px 0 0 2px;"></div>
<svg class="a" style="left:928px;top:422px" width="9" height="9" viewBox="928 422 9 9"><circle cx="932.9" cy="426.1" r="1.75" fill="#a0a0a0"/></svg>
<div class="a" style="left:938.2px;top:421.1px;width:69.80px;height:10.00px;background:#555555;border-radius:0 2px 2px 0;"></div>
<div class="t" style="left:938.2px;width:69.79999999999995px;text-align:center;top:422.5px;color:#e6e6e6">0.000</div>
<svg class="a" style="left:1010px;top:422px" width="9" height="9" viewBox="1010 422 9 9"><circle cx="1014.1" cy="426.1" r="1.45" fill="#e0e0e0"/></svg>
<svg class="a" style="left:872px;top:437.40px" width="5" height="5"><path d="M0.5 0.3 L4.5 2.5 L0.5 4.7Z" fill="#e0e0e0"/></svg>
<div class="t" style="left:802px;width:120px;text-align:right;top:436.29999999999995px;color:#d8d8d8">メタリック</div>
<div class="a" style="left:928.2px;top:434.9px;width:79.80px;height:10.00px;background:#272727;border-radius:2px;"></div>
<svg class="a" style="left:928px;top:435px" width="9" height="9" viewBox="928 435 9 9"><circle cx="932.9" cy="439.9" r="1.75" fill="#a0a0a0"/></svg>
<div class="t" style="left:940px;top:436.29999999999995px;color:#e6e6e6;letter-spacing:-0.04px">tex_microwave_roughn...</div>
<div class="t" style="left:802px;width:120px;text-align:right;top:450.09999999999997px;color:#d8d8d8">スペキュラー</div>
<div class="a" style="left:928.2px;top:448.7px;width:10.00px;height:10.00px;background:#272727;border-radius:2px 0 0 2px;"></div>
<svg class="a" style="left:928px;top:449px" width="9" height="9" viewBox="928 449 9 9"><circle cx="932.9" cy="453.7" r="1.75" fill="#a0a0a0"/></svg>
<div class="a" style="left:938.2px;top:448.7px;width:69.80px;height:10.00px;background:#555555;border-radius:0 2px 2px 0;"></div>
<div class="a" style="left:938.2px;top:448.7px;width:34.10px;height:10.00px;background:#4772b3;border-radius:0;"></div>
<div class="t" style="left:938.2px;width:69.79999999999995px;text-align:center;top:450.09999999999997px;color:#e6e6e6">0.500</div>
<svg class="a" style="left:1010px;top:449px" width="9" height="9" viewBox="1010 449 9 9"><circle cx="1014.1" cy="453.7" r="1.45" fill="#e0e0e0"/></svg>
<div class="t" style="left:802px;width:120px;text-align:right;top:463.9px;color:#d8d8d8">スペキュラーチン...</div>
<div class="a" style="left:928.2px;top:462.5px;width:10.00px;height:10.00px;background:#272727;border-radius:2px 0 0 2px;"></div>
<svg class="a" style="left:928px;top:463px" width="9" height="9" viewBox="928 463 9 9"><circle cx="932.9" cy="467.5" r="1.75" fill="#a0a0a0"/></svg>
<div class="a" style="left:938.2px;top:462.5px;width:69.80px;height:10.00px;background:#555555;border-radius:0 2px 2px 0;"></div>
<div class="t" style="left:938.2px;width:69.79999999999995px;text-align:center;top:463.9px;color:#e6e6e6">0.000</div>
<svg class="a" style="left:1010px;top:463px" width="9" height="9" viewBox="1010 463 9 9"><circle cx="1014.1" cy="467.5" r="1.45" fill="#e0e0e0"/></svg>
<svg class="a" style="left:872px;top:478.80px" width="5" height="5"><path d="M0.5 0.3 L4.5 2.5 L0.5 4.7Z" fill="#e0e0e0"/></svg>
<div class="t" style="left:802px;width:120px;text-align:right;top:477.7px;color:#d8d8d8">粗さ</div>
<div class="a" style="left:928.2px;top:476.3px;width:79.80px;height:10.00px;background:#272727;border-radius:2px;"></div>
<svg class="a" style="left:928px;top:477px" width="9" height="9" viewBox="928 477 9 9"><circle cx="932.9" cy="481.3" r="1.75" fill="#a0a0a0"/></svg>
<div class="t" style="left:940px;top:477.7px;color:#e6e6e6;letter-spacing:-0.04px">tex_microwave_roughn...</div>
<div class="t" style="left:802px;width:120px;text-align:right;top:491.5px;color:#d8d8d8">異方性</div>
<div class="a" style="left:928.2px;top:490.1px;width:10.00px;height:10.00px;background:#272727;border-radius:2px 0 0 2px;"></div>
<svg class="a" style="left:928px;top:491px" width="9" height="9" viewBox="928 491 9 9"><circle cx="932.9" cy="495.1" r="1.75" fill="#a0a0a0"/></svg>
<div class="a" style="left:938.2px;top:490.1px;width:69.80px;height:10.00px;background:#555555;border-radius:0 2px 2px 0;"></div>
<div class="t" style="left:938.2px;width:69.79999999999995px;text-align:center;top:491.5px;color:#e6e6e6">0.000</div>
<svg class="a" style="left:1010px;top:491px" width="9" height="9" viewBox="1010 491 9 9"><circle cx="1014.1" cy="495.1" r="1.45" fill="#e0e0e0"/></svg>
<div class="t" style="left:802px;width:120px;text-align:right;top:505.29999999999995px;color:#d8d8d8">異方性の回転</div>
<div class="a" style="left:928.2px;top:503.9px;width:10.00px;height:10.00px;background:#272727;border-radius:2px 0 0 2px;"></div>
<svg class="a" style="left:928px;top:504px" width="9" height="9" viewBox="928 504 9 9"><circle cx="932.9" cy="508.9" r="1.75" fill="#a0a0a0"/></svg>
<div class="a" style="left:938.2px;top:503.9px;width:69.80px;height:10.00px;background:#555555;border-radius:0 2px 2px 0;"></div>
<div class="t" style="left:938.2px;width:69.79999999999995px;text-align:center;top:505.29999999999995px;color:#e6e6e6">0.000</div>
<svg class="a" style="left:1010px;top:504px" width="9" height="9" viewBox="1010 504 9 9"><circle cx="1014.1" cy="508.9" r="1.45" fill="#e0e0e0"/></svg>
<!--PROPS_END-->
<!-- timeline -->
<div class="a" style="left:0;top:481px;width:845px;height:29px;background:#1a1a1a"></div>
<div class="a" style="left:0;top:482.4px;width:843.5px;height:14px;background:#2c2c2c;border-radius:0 3px 0 0"></div>
<div class="a" style="left:0;top:496.6px;width:843.5px;height:14px;background:#1f1f1f"></div>
<div class="a" style="left:-3px;top:483.6px;width:23px;height:11px;background:#262626;border-radius:2px"></div>
<div class="a" style="left:21px;top:483.6px;width:43px;height:11px;background:#262626;border-radius:2px"></div>
<div class="t" style="left:-1px;top:486.5px;color:#e0e0e0;">再生</div>
<div class="t" style="left:24.6px;top:486.5px;color:#e0e0e0;">キーイング</div>
<div class="t" style="left:69.8px;top:486.5px;color:#e0e0e0;">ビュー</div>
<div class="t" style="left:96.4px;top:486.5px;color:#e0e0e0;">マーカー</div>
<svg class="a" style="left:0;top:482px" width="845" height="28" viewBox="0 482 845 28">
<path d="M15.0 489.4 L16.7 491.1 L18.4 489.4" fill="none" stroke="#d0d0d0" stroke-width="0.8"/>
<path d="M59.199999999999996 489.4 L60.9 491.1 L62.6 489.4" fill="none" stroke="#d0d0d0" stroke-width="0.8"/>
<rect x="356.3" y="484.9" width="10" height="10.2" rx="2" fill="#4d4d4d"/>
<rect x="366.1" y="484.9" width="11.2" height="10.2" rx="2" fill="#262626"/>
<rect x="366.1" y="484.9" width="3" height="10.2" fill="#262626"/>
<circle cx="361.2" cy="490" r="2.4" fill="#f0f0f0"/>
<path d="M370.6 489.8 L371.7 490.6 L372.8 489.8" fill="none" stroke="#555" stroke-width="0.6"/>
<rect x="381" y="484.9" width="64.7" height="10.2" rx="2" fill="#3f3f3f"/>
<rect x="383.9" y="487.1" width="1.1" height="5.8" fill="#ececec"/><path d="M389.4 487.2 L385.6 490 L389.4 492.8Z" fill="#ececec"/>
<path d="M394.6 487.6 L397 490 L394.6 492.4 L392.2 490Z" fill="#ececec"/><path d="M400.5 487.5 L397.8 490 L400.5 492.5Z" fill="#ececec"/>
<path d="M411.2 486.6 L405.6 490 L411.2 493.4Z" fill="#ececec"/>
<path d="M416.4 486.6 L422 490 L416.4 493.4Z" fill="#ececec"/>
<path d="M426.3 487.5 L429 490 L426.3 492.5Z" fill="#ececec"/><path d="M432.2 487.6 L434.6 490 L432.2 492.4 L429.8 490Z" fill="#ececec"/>
<path d="M437.4 487.2 L441.2 490 L437.4 492.8Z" fill="#ececec"/><rect x="441.8" y="487.1" width="1.1" height="5.8" fill="#ececec"/>
<rect x="689.8" y="484.9" width="40" height="10.2" rx="2" fill="#4f4f4f"/>
<rect x="733.7" y="484.9" width="106.5" height="10.2" rx="2" fill="#4f4f4f"/>
<rect x="733.7" y="484.9" width="10.3" height="10.2" rx="2" fill="#3a3a3a"/>
<rect x="740" y="484.9" width="4" height="10.2" fill="#3a3a3a"/>
<rect x="792.6" y="484.9" width="0.8" height="10.2" fill="#3f3f3f"/>
<circle cx="738.8" cy="490.9" r="3" fill="none" stroke="#e0e0e0" stroke-width="1"/>
<path d="M738.8 489.4 L738.8 490.9 L739.9 490.9 M737.8 487.3 L739.8 487.3 M741 487.6 L741.8 488.4" fill="none" stroke="#d8d8d8" stroke-width="0.7"/>
<rect x="-3" y="497.8" width="9.2" height="10" rx="2" fill="#4772b3" stroke="#161c24" stroke-width="0.5"/>
<path d="M843 504.5 L841.3 506.2 L843 507.9" fill="none" stroke="#888" stroke-width="0.7"/>
</svg>
<div class="t" style="left:699.30px;width:20px;text-align:center;top:486.5px;color:#dcdcdc">0</div>
<div class="t" style="left:752.8px;top:486.5px;color:#e0e0e0;">開始</div>
<div class="t" style="left:777.50px;width:10px;text-align:center;top:486.5px;color:#dcdcdc">1</div>
<div class="t" style="left:800.5px;top:486.5px;color:#e0e0e0;">終了</div>
<div class="t" style="left:817.00px;width:20px;text-align:center;top:486.5px;color:#dcdcdc">250</div>
<div class="t" style="left:16.50px;width:30px;text-align:center;top:499.8px;color:#d0d0d0">10</div>
<div class="t" style="left:49.00px;width:30px;text-align:center;top:499.8px;color:#d0d0d0">20</div>
<div class="t" style="left:81.50px;width:30px;text-align:center;top:499.8px;color:#d0d0d0">30</div>
<div class="t" style="left:114.00px;width:30px;text-align:center;top:499.8px;color:#d0d0d0">40</div>
<div class="t" style="left:146.50px;width:30px;text-align:center;top:499.8px;color:#d0d0d0">50</div>
<div class="t" style="left:179.00px;width:30px;text-align:center;top:499.8px;color:#d0d0d0">60</div>
<div class="t" style="left:211.50px;width:30px;text-align:center;top:499.8px;color:#d0d0d0">70</div>
<div class="t" style="left:244.00px;width:30px;text-align:center;top:499.8px;color:#d0d0d0">80</div>
<div class="t" style="left:276.50px;width:30px;text-align:center;top:499.8px;color:#d0d0d0">90</div>
<div class="t" style="left:309.00px;width:30px;text-align:center;top:499.8px;color:#d0d0d0">100</div>
<div class="t" style="left:341.50px;width:30px;text-align:center;top:499.8px;color:#d0d0d0">110</div>
<div class="t" style="left:374.00px;width:30px;text-align:center;top:499.8px;color:#d0d0d0">120</div>
<div class="t" style="left:406.50px;width:30px;text-align:center;top:499.8px;color:#d0d0d0">130</div>
<div class="t" style="left:439.00px;width:30px;text-align:center;top:499.8px;color:#d0d0d0">140</div>
<div class="t" style="left:471.50px;width:30px;text-align:center;top:499.8px;color:#d0d0d0">150</div>
<div class="t" style="left:504.00px;width:30px;text-align:center;top:499.8px;color:#d0d0d0">160</div>
<div class="t" style="left:536.50px;width:30px;text-align:center;top:499.8px;color:#d0d0d0">170</div>
<div class="t" style="left:569.00px;width:30px;text-align:center;top:499.8px;color:#d0d0d0">180</div>
<div class="t" style="left:601.50px;width:30px;text-align:center;top:499.8px;color:#d0d0d0">190</div>
<div class="t" style="left:634.00px;width:30px;text-align:center;top:499.8px;color:#d0d0d0">200</div>
<div class="t" style="left:666.50px;width:30px;text-align:center;top:499.8px;color:#d0d0d0">210</div>
<div class="t" style="left:699.00px;width:30px;text-align:center;top:499.8px;color:#d0d0d0">220</div>
<div class="t" style="left:731.50px;width:30px;text-align:center;top:499.8px;color:#d0d0d0">230</div>
<div class="t" style="left:764.00px;width:30px;text-align:center;top:499.8px;color:#d0d0d0">240</div>
<div class="t" style="left:796.50px;width:30px;text-align:center;top:499.8px;color:#d0d0d0">250</div>
<div class="t" style="left:-2.6px;top:499.6px;color:#e8f0ff">1</div>
</div></body></html>
